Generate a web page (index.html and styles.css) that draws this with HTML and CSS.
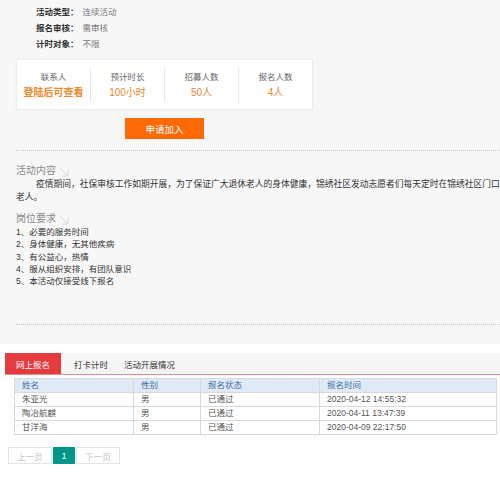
FILE: index.html
```html
<!DOCTYPE html>
<html lang="zh">
<head>
<meta charset="utf-8">
<link rel="stylesheet" href="styles.css">
</head>
<body>
<div class="page">
  <section class="detail">
    <div class="info">
      <div class="info-row"><span class="lbl">活动类型：</span><span class="val">连续活动</span></div>
      <div class="info-row"><span class="lbl">报名审核：</span><span class="val">需审核</span></div>
      <div class="info-row"><span class="lbl">计时对象：</span><span class="val">不限</span></div>
    </div>
    <div class="stats">
      <div class="stat"><div class="stat-lbl">联系人</div><div class="stat-val strong">登陆后可查看</div></div>
      <div class="stat"><div class="stat-lbl">预计时长</div><div class="stat-val">100小时</div></div>
      <div class="stat"><div class="stat-lbl">招募人数</div><div class="stat-val">50人</div></div>
      <div class="stat"><div class="stat-lbl">报名人数</div><div class="stat-val">4人</div></div>
    </div>
    <div class="btn-wrap"><button class="apply">申请加入</button></div>
    <div class="dots"></div>
    <div class="content">
      <h3 class="sub">活动内容<svg class="corner" width="12" height="12" viewBox="0 0 12 12"><path d="M2 2 L10 10 M10 4 V10 H4" stroke="#d4d4d4" stroke-width="1" fill="none"/></svg></h3>
      <p class="para"><span class="indent">疫情期间，社保审核工作如期开展，为了保证广大退休老人的身体健康，锦绣社区发动志愿者们每天定时在锦绣社区门口</span><br>老人。</p>
      <h3 class="sub sub2">岗位要求<svg class="corner" width="12" height="12" viewBox="0 0 12 12"><path d="M2 2 L10 10 M10 4 V10 H4" stroke="#d4d4d4" stroke-width="1" fill="none"/></svg></h3>
      <ul class="reqs">
        <li>1、必要的服务时间</li>
        <li>2、身体健康，无其他疾病</li>
        <li>3、有公益心，热情</li>
        <li>4、服从组织安排，有团队意识</li>
        <li>5、本活动仅接受线下报名</li>
      </ul>
      <div class="dots dots2"></div>
    </div>
  </section>
  <section class="signup">
    <div class="tabs">
      <span class="tab active">网上报名</span>
      <span class="tab">打卡计时</span>
      <span class="tab">活动开展情况</span>
    </div>
    <table class="list">
      <thead>
        <tr><th class="c1">姓名</th><th class="c2">性别</th><th class="c3">报名状态</th><th class="c4">报名时间</th></tr>
      </thead>
      <tbody>
        <tr><td>朱亚光</td><td>男</td><td>已通过</td><td>2020-04-12 14:55:32</td></tr>
        <tr><td>陶冶航麒</td><td>男</td><td>已通过</td><td>2020-04-11 13:47:39</td></tr>
        <tr><td>甘洋海</td><td>男</td><td>已通过</td><td>2020-04-09 22:17:50</td></tr>
      </tbody>
    </table>
    <div class="pager">
      <span class="pg">上一页</span><span class="pg cur">1</span><span class="pg">下一页</span>
    </div>
  </section>
</div>
</body>
</html>
```
FILE: styles.css
```css
html, body {
  margin: 0;
  padding: 0;
  background: #fff;
}
body {
  width: 500px;
  overflow: hidden;
  font-family: "Liberation Sans", "Noto Sans CJK SC", sans-serif;
  font-size: 8.5px;
  color: #333;
}
.page {
  width: 500px;
  overflow: hidden;
}
.detail {
  background: #f7f7f7;
  height: 344px;
  padding-top: 4px;
  box-sizing: border-box;
}
.info {
  padding-left: 36px;
}
.info-row {
  line-height: 16px;
  height: 16px;
}
.lbl {
  color: #333;
  font-weight: bold;
}
.val {
  color: #777;
  margin-left: 4px;
}
.stats {
  margin: 7px 0 0 16px;
  width: 297px;
  height: 51px;
  box-sizing: border-box;
  background: #fff;
  border: 1px solid #ececec;
  box-shadow: 0 0 2px rgba(0,0,0,0.06);
  display: flex;
  align-items: center;
}
.stat {
  flex: 1;
  text-align: center;
  border-left: 1px solid #e8e8e8;
  height: 34px;
  display: flex;
  flex-direction: column;
  justify-content: center;
  gap: 4px;
}
.stat:first-child {
  border-left: none;
}
.stat-lbl {
  color: #666;
  line-height: 12px;
}
.stat-val {
  color: #e9892f;
  font-size: 10px;
  line-height: 12px;
}
.stat-val.strong {
  font-weight: bold;
  color: #ea8a2c;
}
.btn-wrap {
  margin: 8px 0 0 125px;
}
.apply {
  display: block;
  width: 79px;
  height: 21px;
  border: none;
  padding: 0;
  background: #ff6a07;
  color: #fff;
  font-family: inherit;
  font-size: 9.5px;
}
.dots {
  margin: 11px 0 0 16px;
  border-top: 1px dotted #c8c8c8;
}
.content {
  padding-left: 16px;
}
.sub {
  margin: 13px 0 0 0;
  font-weight: normal;
  font-size: 10px;
  color: #8a8a8a;
  line-height: 14px;
  height: 14px;
  display: flex;
  align-items: center;
}
.corner {
  margin-left: 2px;
  margin-top: 1px;
}
.sub2 {
  margin-top: 8px;
}
.para {
  margin: 0;
  line-height: 13px;
  color: #333;
  white-space: nowrap;
  font-size: 8.75px;
}
.indent {
  padding-left: 20px;
}
.reqs {
  list-style: none;
  margin: 0;
  padding: 0;
}
.reqs li {
  line-height: 12.3px;
  height: 12.3px;
}
.dots2 {
  margin: 37px 0 0 0;
}
.signup {
  padding-top: 9px;
}
.tabs {
  margin-left: 5px;
  height: 21px;
  background: #f5f5f5;
  border-bottom: 1px solid #e38e8e;
  display: flex;
  align-items: stretch;
}
.tab {
  display: flex;
  align-items: center;
  padding: 0 8px;
  font-size: 8.5px;
  color: #333;
}
.tab.active {
  background: #e53b3f;
  color: #fff;
  padding: 0 11px;
  margin-right: 5px;
}
.list {
  margin: 3px 0 0 14px;
  width: 483px;
  border-collapse: collapse;
  font-size: 8.5px;
}
.list th, .list td {
  border: 1px solid #d8d8d8;
  height: 13px;
  padding: 0 0 0 7px;
  text-align: left;
  font-weight: normal;
  line-height: 13px;
}
.list th {
  background: #dfeaf6;
  color: #3c6fa6;
}
.list td {
  color: #555;
}
.c1 { width: 111px; }
.c2 { width: 59px; }
.c3 { width: 111px; }
.pager {
  margin: 12px 0 0 8px;
  display: flex;
}
.pg {
  height: 17px;
  box-sizing: border-box;
  border: 1px solid #e4e4e4;
  color: #c4c4c4;
  font-size: 8.5px;
  display: flex;
  align-items: center;
  justify-content: center;
  width: 44px;
}
.pg.cur {
  width: 22px;
  background: #009688;
  border-color: #009688;
  color: #fff;
}
.pg + .pg {
  margin-left: 1px;
}
```
